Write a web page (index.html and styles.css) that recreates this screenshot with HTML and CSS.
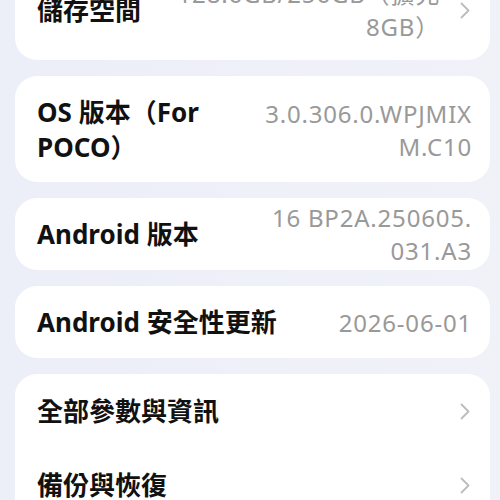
FILE: index.html
```html
<!DOCTYPE html>
<html lang="zh-Hant">
<head>
<meta charset="utf-8">
<link rel="stylesheet" href="styles.css">
</head>
<body>
<main class="page">
  <section class="card">
    <div class="row row-storage">
      <div class="title">儲存空間</div>
      <div class="right">
        <div class="value"><span>128.6GB/256GB（擴充</span><span>8GB）</span></div>
        <svg class="chev" width="10" height="17" viewBox="0 0 10 17"><polyline points="1.5,1.5 8.5,8.5 1.5,15.5" fill="none" stroke="#bcbcbc" stroke-width="1.8" stroke-linecap="round" stroke-linejoin="round"/></svg>
      </div>
    </div>
  </section>
  <section class="card">
    <div class="row row-tall">
      <div class="title"><span>OS 版本（For</span><span>POCO）</span></div>
      <div class="value"><span>3.0.306.0.WPJMIX</span><span>M.C10</span></div>
    </div>
  </section>
  <section class="card">
    <div class="row row-std">
      <div class="title">Android 版本</div>
      <div class="value"><span>16 BP2A.250605.</span><span>031.A3</span></div>
    </div>
  </section>
  <section class="card">
    <div class="row row-std">
      <div class="title">Android 安全性更新</div>
      <div class="value"><span>2026-06-01</span></div>
    </div>
  </section>
  <section class="card">
    <div class="row row-link">
      <div class="title">全部參數與資訊</div>
      <svg class="chev" width="10" height="17" viewBox="0 0 10 17"><polyline points="1.5,1.5 8.5,8.5 1.5,15.5" fill="none" stroke="#bcbcbc" stroke-width="1.8" stroke-linecap="round" stroke-linejoin="round"/></svg>
    </div>
    <div class="row row-link">
      <div class="title">備份與恢復</div>
      <svg class="chev" width="10" height="17" viewBox="0 0 10 17"><polyline points="1.5,1.5 8.5,8.5 1.5,15.5" fill="none" stroke="#bcbcbc" stroke-width="1.8" stroke-linecap="round" stroke-linejoin="round"/></svg>
    </div>
  </section>
</main>
</body>
</html>
```
FILE: styles.css
```css
html, body {
  margin: 0;
  padding: 0;
  height: 500px;
  overflow: hidden;
}
body {
  background: linear-gradient(90deg, #eceef8 0%, #f1f2f8 100%);
  font-family: "Noto Sans", "Noto Sans CJK TC", sans-serif;
}
.page {
  margin-top: -39px;
  padding: 0 10px 0 15px;
  display: flex;
  flex-direction: column;
  gap: 16px;
}
.card {
  background: #ffffff;
  border-radius: 22px;
}
.row {
  display: flex;
  align-items: center;
  justify-content: space-between;
  padding-left: 22px;
  padding-right: 18px;
  box-sizing: border-box;
}
.row-storage {
  padding-top: 16px;
  padding-bottom: 17px;
  padding-right: 20px;
}
.row-tall {
  padding-top: 19px;
  padding-bottom: 17px;
}
.row-std {
  min-height: 72px;
  padding-top: 3px;
  padding-bottom: 3px;
}
.row-link {
  height: 74px;
  padding-right: 20px;
}
.title {
  font-weight: 700;
  font-size: 26px;
  line-height: 35px;
  color: #111111;
  white-space: nowrap;
}
.title span,
.value span {
  display: block;
}
.value {
  text-align: right;
  font-size: 24px;
  line-height: 33px;
  letter-spacing: 0.8px;
  color: #999999;
  white-space: nowrap;
}
.right {
  display: flex;
  align-items: center;
  gap: 20px;
}
.chev {
  display: block;
  flex: none;
}
```
